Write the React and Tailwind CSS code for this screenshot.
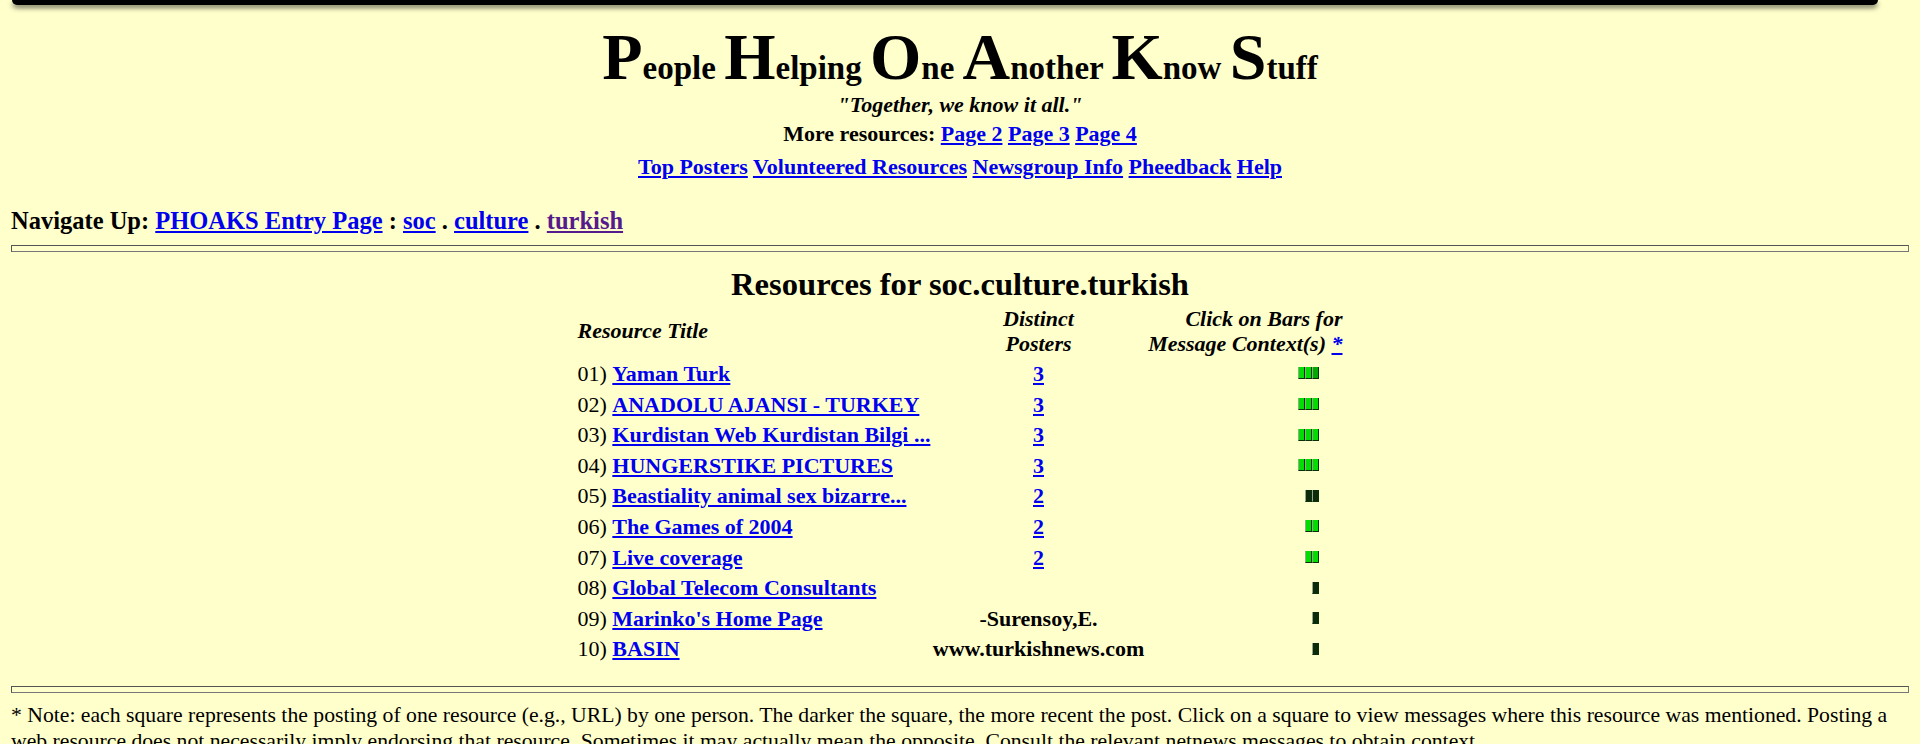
const link = 'text-[#0000ee] underline font-bold';

const rows = [
  { n: '01', title: 'Yaman Turk', posters: '3', bars: ['bright', 'bright', 'mid'] },
  { n: '02', title: 'ANADOLU AJANSI - TURKEY', posters: '3', bars: ['bright', 'bright', 'bright'] },
  { n: '03', title: 'Kurdistan Web Kurdistan Bilgi ...', posters: '3', bars: ['bright', 'bright', 'bright'] },
  { n: '04', title: 'HUNGERSTIKE PICTURES', posters: '3', bars: ['bright', 'bright', 'bright'] },
  { n: '05', title: 'Beastiality animal sex bizarre...', posters: '2', bars: ['dark', 'dark'] },
  { n: '06', title: 'The Games of 2004', posters: '2', bars: ['bright', 'bright'] },
  { n: '07', title: 'Live coverage', posters: '2', bars: ['bright', 'bright'] },
  { n: '08', title: 'Global Telecom Consultants', bars: ['dark'] },
  { n: '09', title: "Marinko's Home Page", author: '-Surensoy,E.', bars: ['dark'] },
  { n: '10', title: 'BASIN', author: 'www.turkishnews.com', bars: ['dark'] },
];

const squareColor = {
  bright: 'bg-[#00dd00]',
  mid: 'bg-[#00aa00]',
  dark: 'bg-[#0b2b0b]',
};

function Square({ shade }) {
  return (
    <span
      className={`block w-[7px] h-[12px] border-r border-b border-[#0a300a] border-l border-l-[#9aa88a] ${squareColor[shade]}`}
    />
  );
}

function Big({ children }) {
  return <span className="text-[66px] font-bold">{children}</span>;
}

function Small({ children }) {
  return <span className="text-[33px] font-bold leading-none">{children}</span>;
}

export default function App() {
  return (
    <div className="min-h-screen bg-[#ffffcc] text-black font-['Liberation_Serif',serif] text-[22px] overflow-hidden">
      <div className="ml-[12px] mr-[42px] h-[5px] bg-black rounded-b-[6px] shadow-[0_3px_5px_rgba(0,0,0,0.55)]" />

      <div className="px-[11px]">
        {/* masthead: big initials, smaller rest of each word */}
        <div className="mt-[18.5px] text-[66px] leading-[66px] text-center whitespace-nowrap">
          <Big>P</Big><Small>eople </Small>
          <Big>H</Big><Small>elping </Small>
          <Big>O</Big><Small>ne </Small>
          <Big>A</Big><Small>nother </Small>
          <Big>K</Big><Small>now </Small>
          <Big>S</Big><Small>tuff</Small>
        </div>

        <div className="mt-[2.5px] leading-[25px] text-center font-bold italic">"Together, we know it all."</div>

        <div className="leading-[33px] text-center font-bold">
          More resources: <a className={link}>Page 2</a> <a className={link}>Page 3</a>{' '}
          <a className={link}>Page 4</a>
        </div>

        <div className="leading-[33px] text-center font-bold">
          <a className={link}>Top Posters</a> <a className={link}>Volunteered Resources</a>{' '}
          <a className={link}>Newsgroup Info</a> <a className={link}>Pheedback</a>{' '}
          <a className={link}>Help</a>
        </div>

        <div className="mt-[20px] leading-[35px] text-[24.5px] font-bold">
          Navigate Up: <a className={link}>PHOAKS Entry Page</a> : <a className={link}>soc</a> .{' '}
          <a className={link}>culture</a> .{' '}
          <a className="text-[#551a8b] underline font-bold">turkish</a>
        </div>

        <div className="mt-[7px] h-[7px] border border-t-[#555] border-l-[#555] border-b-[#777] border-r-[#777]" />

        <h2 className="mt-[12px] leading-[40px] text-[32.6px] font-bold text-center">
          Resources for soc.culture.turkish
        </h2>

        <div className="mx-auto w-[765px]">
          <div className="mt-[1.5px] grid grid-cols-[354px_214px_197px] leading-[25.5px] font-bold italic">
            <div className="self-center">Resource Title</div>
            <div className="text-center">
              Distinct
              <br />
              Posters
            </div>
            <div className="text-right">
              Click on Bars for
              <br />
              Message Context(s) <a className={link}>*</a>
            </div>
          </div>

          <div className="mt-[1.7px]">
            {rows.map((r) => (
              <div key={r.n} className="grid grid-cols-[354px_214px_197px] h-[30.6px] items-center leading-[25px]">
                <div className="whitespace-nowrap">
                  {r.n}) <a className={link}>{r.title}</a>
                </div>
                <div className="text-center font-bold whitespace-nowrap">
                  {r.posters && <a className={link}>{r.posters}</a>}
                  {r.author}
                </div>
                <div className="flex justify-end pr-[24px]">
                  {r.bars.map((b, i) => (
                    <Square key={i} shade={b} />
                  ))}
                </div>
              </div>
            ))}
          </div>
        </div>

        <div className="mt-[21.8px] h-[7px] border border-t-[#555] border-l-[#555] border-b-[#777] border-r-[#777]" />

        <p className="mt-[9px] leading-[26px] text-[21.7px]">
          * Note: each square represents the posting of one resource (e.g., URL) by one person. The darker the
          square, the more recent the post. Click on a square to view messages where this resource was
          mentioned. Posting a web resource does not necessarily imply endorsing that resource. Sometimes it
          may actually mean the opposite. Consult the relevant netnews messages to obtain context.
        </p>
      </div>
    </div>
  );
}
